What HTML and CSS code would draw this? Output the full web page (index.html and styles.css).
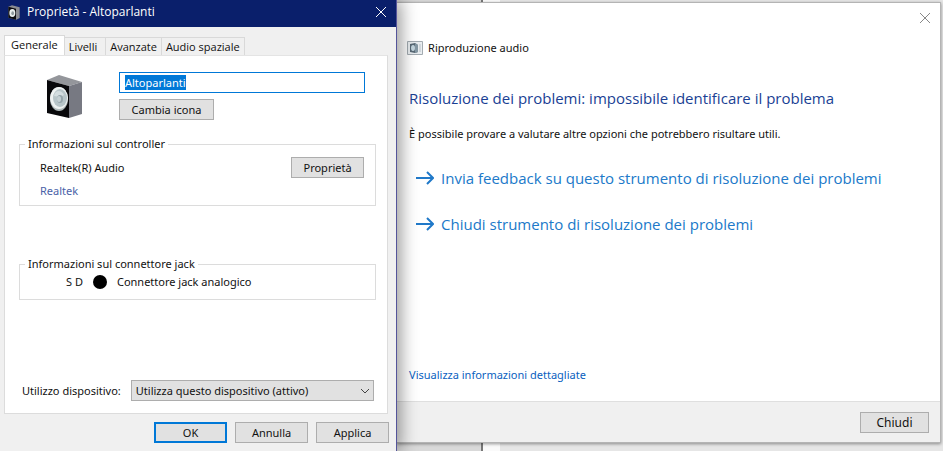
FILE: index.html
```html
<!DOCTYPE html>
<html lang="it">
<head>
    <meta charset="UTF-8">
    <meta name="viewport" content="width=device-width, initial-scale=1.0">
    <title>Proprietà - Altoparlanti</title>
    <link rel="stylesheet" href="styles.css">
</head>
<body>
    <main class="desktop">
        <form class="properties" onsubmit="return false">
            <header class="titlebar">
                <svg class="titlebar-icon" viewBox="0 0 36 43">
                    <path d="M1 4 12 0 35 6V38L25 43 1 37z" fill="#8a8c92"/>
                    <path d="M1 4 24 10V43L1 37z" fill="#0b0b10"/>
                    <ellipse cx="13" cy="23" rx="9" ry="12" fill="#e8eeee"/>
                    <ellipse cx="14" cy="24" rx="4" ry="6" fill="#8d989c"/>
                </svg>
                <h1>Proprietà - Altoparlanti</h1>
                <button type="button" class="close" aria-label="Chiudi finestra">
                    <svg viewBox="0 0 12 12"><path d="M1 1 11 11M11 1 1 11"/></svg>
                </button>
            </header>

            <div class="tabs" role="tablist">
                <button type="button" class="tab active" role="tab" aria-selected="true">Generale</button>
                <button type="button" class="tab short" role="tab">Livelli</button>
                <button type="button" class="tab" role="tab">Avanzate</button>
                <button type="button" class="tab" role="tab">Audio spaziale</button>
            </div>

            <section class="panel">
                <div class="device">
                    <svg class="speaker" viewBox="0 0 36 43">
                        <path d="M1 5 13 0 36 7 23 11z" fill="#94969b"/>
                        <path d="M23 11 36 7V39L23 43z" fill="#777982"/>
                        <path d="M1 5 23 11V43L1 38z" fill="#08080b"/>
                        <ellipse cx="13" cy="24" rx="9" ry="12" fill="#aeb8b9"/>
                        <ellipse cx="13" cy="23" rx="9" ry="11" fill="#eef2f2"/>
                        <ellipse cx="14" cy="23" rx="7" ry="9" fill="#b7c5c9"/>
                        <path d="M8 21C9 15 15 14 18 20L14 22z" fill="#d3dde0"/>
                        <ellipse cx="14" cy="24" rx="3" ry="4" fill="#94a4aa"/>
                        <ellipse cx="13" cy="24" rx="2" ry="3" fill="#c4d0d4"/>
                    </svg>
                    <div class="device-fields">
                        <label class="name-box">
                            <input type="text" id="deviceName" value="Altoparlanti" aria-label="Nome dispositivo">
                        </label>
                        <button type="button" class="btn">Cambia icona</button>
                    </div>
                </div>

                <fieldset class="group controller">
                    <legend>Informazioni sul controller</legend>
                    <div class="controller-info">
                        <p>Realtek(R) Audio</p>
                        <a href="#">Realtek</a>
                    </div>
                    <button type="button" class="btn">Proprietà</button>
                </fieldset>

                <fieldset class="group jack">
                    <legend>Informazioni sul connettore jack</legend>
                    <span class="side">S D</span>
                    <span class="dot"></span>
                    <span>Connettore jack analogico</span>
                </fieldset>

                <div class="usage">
                    <label for="usage">Utilizzo dispositivo:</label>
                    <div class="select">
                        <select id="usage">
                            <option>Utilizza questo dispositivo (attivo)</option>
                            <option>Non utilizzare questo dispositivo (disattiva)</option>
                        </select>
                        <svg viewBox="0 0 10 6"><path d="M1 1 5 5 9 1"/></svg>
                    </div>
                </div>
            </section>

            <footer class="actions">
                <button type="submit" class="btn default">OK</button>
                <button type="button" class="btn">Annulla</button>
                <button type="button" class="btn">Applica</button>
            </footer>
        </form>

        <section class="troubleshooter">
            <button type="button" class="close" aria-label="Chiudi finestra">
                <svg viewBox="0 0 12 12"><path d="M1 1 11 11M11 1 1 11"/></svg>
            </button>
            <div class="wizard">
                <div class="wizard-name">
                    <svg viewBox="0 0 16 14">
                        <path d="M.5.5h15v13H.5z" fill="#e9edf0" stroke="#a3abb1"/>
                        <path d="M3 3 8 2 11 4V11L8 12 3 11z" fill="#596a76"/>
                        <path d="M8 2 11 4V11L8 12z" fill="#8497a3"/>
                        <ellipse cx="6" cy="7" rx="2" ry="3" fill="#c4d6df"/>
                        <path d="M13 3V11" stroke="#b8c1c7"/>
                    </svg>
                    <span>Riproduzione audio</span>
                </div>
                <h2>Risoluzione dei problemi: impossibile identificare il problema</h2>
                <p>È possibile provare a valutare altre opzioni che potrebbero risultare utili.</p>
                <a href="#" class="option">
                    <svg viewBox="0 0 18 14"><path d="M0 7H17M11 1 17 7 11 13"/></svg>
                    Invia feedback su questo strumento di risoluzione dei problemi
                </a>
                <a href="#" class="option">
                    <svg viewBox="0 0 18 14"><path d="M0 7H17M11 1 17 7 11 13"/></svg>
                    Chiudi strumento di risoluzione dei problemi
                </a>
                <a href="#" class="details">Visualizza informazioni dettagliate</a>
            </div>
            <footer class="wizard-footer">
                <button type="button" class="btn">Chiudi</button>
            </footer>
        </section>
    </main>

    <script>
        // il nome del dispositivo si apre già selezionato
        const deviceName = document.getElementById('deviceName');
        deviceName.focus();
        deviceName.select();
    </script>
</body>
</html>
```
FILE: styles.css
```css
* {
    margin: 0;
    padding: 0;
    box-sizing: border-box;
}

body {
    font-family: "Noto Sans", "Open Sans", sans-serif;
    font-size: 11px;
    line-height: 16px;
    color: #111;
    background-color: #e8e8e8;
}

button, input, select {
    font: inherit;
    color: inherit;
}

a {
    text-decoration: none;
}

.desktop {
    display: grid;
    grid-template-columns: 8fr 11fr;
    min-height: 100vh;
    /* finestre dietro ai due dialoghi */
    background: linear-gradient(to right, #d9d9d9 51%, #777 51%, #777 51.2%, #fafafa 51.2%, #fafafa 53%, #e6e6e6 53%);
}

/* Finestra proprietà */
.properties {
    display: flex;
    flex-direction: column;
    background-color: #f0f0f0;
    border-right: 1px solid #54549a;
    z-index: 1;
    box-shadow: 4px 0 16px rgba(0, 0, 0, 0.4);
}

.titlebar {
    display: flex;
    align-items: center;
    gap: 7px;
    height: 27px;
    padding: 0 9px 3px 8px;
    background-color: #0a1f6b;
    color: white;
}

.titlebar h1 {
    flex: 1;
    font-family: "Open Sans", "Noto Sans", sans-serif;
    font-size: 12px;
    font-weight: normal;
}

.titlebar-icon {
    width: 12px;
    height: 15px;
}

.close {
    display: flex;
    background: none;
    border: none;
}

.close svg {
    width: 12px;
    height: 12px;
    fill: none;
    stroke: currentColor;
}

.tabs {
    display: flex;
    align-items: flex-end;
    height: 28px;
    padding-left: 4px;
}

.tab {
    height: 18px;
    padding: 0 4px;
    background-color: #f0f0f0;
    border: 1px solid #d9d9d9;
    border-left: none;
    border-bottom: none;
    font-family: "Open Sans", "Noto Sans", sans-serif;
    white-space: nowrap;
}

.tab.active {
    height: 20px;
    padding: 0 6px 2px;
    background-color: white;
    border-left: 1px solid #d9d9d9;
}

.tab.short {
    padding-right: 8px;
}

.panel {
    flex: 1;
    display: flex;
    flex-direction: column;
    margin: 0 8px 0 4px;
    padding: 16px 11px 12px 14px;
    background-color: white;
    border: 1px solid #dcdcdc;
    border-top-color: #e4e4e4;
}

.device {
    display: flex;
    gap: 37px;
    padding: 0 11px 0 27px;
}

.speaker {
    width: 36px;
    height: 43px;
    margin-top: 3px;
}

.device-fields {
    flex: 1;
}

.device-fields .btn {
    min-width: 95px;
}

.name-box {
    display: flex;
    margin-bottom: 6px;
    padding: 2px 5px;
    border: 1px solid #0078d7;
}

.name-box input {
    flex: 1;
    min-width: 0;
    height: 15px;
    border: none;
    outline: none;
}

.name-box input::selection {
    background-color: #0078d7;
    color: white;
}

.btn {
    min-width: 73px;
    height: 21px;
    padding: 0 8px;
    background-color: #e1e1e1;
    border: 1px solid #adadad;
}

.btn.default {
    border: 2px solid #0078d7;
}

.group {
    display: flex;
    border: 1px solid #dcdcdc;
}

.group legend {
    margin-left: 5px;
    padding: 0 3px;
}

.controller {
    justify-content: space-between;
    align-items: flex-start;
    margin-top: 16px;
    padding: 5px 11px 6px 0;
}

.controller-info {
    display: flex;
    flex-direction: column;
    gap: 7px;
    padding: 3px 0 0 20px;
}

.controller-info a {
    color: #4a62a8;
}

.jack {
    align-items: center;
    gap: 10px;
    margin-top: 50px;
    padding: 2px 8px 9px 0;
}

.side {
    padding-left: 46px;
}

.dot {
    width: 14px;
    height: 14px;
    border-radius: 50%;
    background-color: black;
}

.usage {
    display: flex;
    align-items: center;
    gap: 10px;
    margin-top: auto;
    padding: 0 2px 0 3px;
}

.select {
    display: grid;
    flex: 1;
    align-items: center;
}

.select select {
    grid-area: 1 / 1;
    width: 100%;
    height: 21px;
    padding: 0 4px;
    appearance: none;
    background-color: #e1e1e1;
    border: 1px solid #adadad;
    border-radius: 0;
}

.select svg {
    grid-area: 1 / 1;
    justify-self: end;
    width: 10px;
    height: 6px;
    margin-right: 4px;
    fill: none;
    stroke: #444;
    pointer-events: none;
}

.actions {
    display: flex;
    justify-content: flex-end;
    gap: 8px;
    padding: 8px 7px;
}

/* Risoluzione dei problemi */
.troubleshooter {
    display: flex;
    flex-direction: column;
    margin: 2px 2px 8px 0;
    background-color: white;
    border: 1px solid #b4b4b4;
    border-left: none;
    box-shadow: 0 1px 3px rgba(0, 0, 0, 0.4);
}

.troubleshooter .close {
    align-self: flex-end;
    padding: 9px 9px 0;
    color: #888;
}

.wizard {
    flex: 1;
    display: flex;
    flex-direction: column;
    align-items: flex-start;
    padding: 16px 12px 18px;
}

.wizard-name {
    display: flex;
    align-items: center;
    gap: 5px;
}

.wizard-name svg {
    width: 16px;
    height: 14px;
    margin-left: -2px;
}

.wizard h2 {
    margin: 30px 0 16px;
    font-family: "Open Sans", "Noto Sans", sans-serif;
    font-size: 15px;
    line-height: 24px;
    font-weight: normal;
    color: #1a3f94;
}

.option {
    display: flex;
    align-items: center;
    gap: 7px;
    margin-top: 22px;
    padding-left: 7px;
    font-family: "Open Sans", "Noto Sans", sans-serif;
    font-size: 15px;
    line-height: 24px;
    color: #2079c9;
}

.wizard p + .option {
    margin-top: 24px;
}

.option svg {
    width: 18px;
    height: 14px;
    fill: none;
    stroke: currentColor;
    stroke-width: 2;
}

.details {
    margin-top: auto;
    color: #0a5fc0;
}

.wizard-footer {
    display: flex;
    justify-content: flex-end;
    padding: 10px 11px 9px;
    background-color: #f0f0f0;
    border-top: 1px solid #dfdfdf;
}

.wizard-footer .btn {
    min-width: 69px;
    font-size: 12px;
}
```
